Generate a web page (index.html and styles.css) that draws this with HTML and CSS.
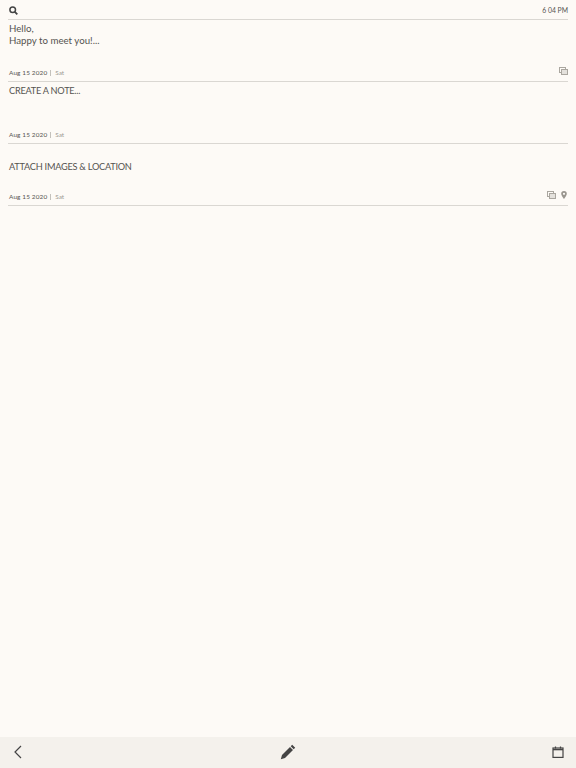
FILE: index.html
```html
<!DOCTYPE html>
<html lang="en">
<head>
    <meta charset="UTF-8">
    <title>Notes</title>
    <link rel="stylesheet" href="styles.css">
</head>
<body>

<div class="page">
    <div class="top">
        <svg class="search" width="9" height="9" viewBox="0 0 9 9">
            <circle cx="3.7" cy="3.7" r="2.8" fill="none" stroke="#444" stroke-width="1.5"/>
            <path d="M5.8 5.8L8.3 8.3" stroke="#444" stroke-width="1.8"/>
        </svg>
        <span class="time">6 04 PM</span>
    </div>

    <div class="list">
        <div class="note">
            <div class="text">Hello,<br>Happy to meet you!...</div>
            <div class="meta">
                <span class="date">Aug 15 2020</span>
                <span class="sep"></span>
                <span class="day">Sat</span>
                <span class="icons">
                    <svg width="9" height="8" viewBox="0 0 9 8">
                        <rect x="0.5" y="0.5" width="6" height="5" fill="none" stroke="#aaa69f"/>
                        <rect x="2.5" y="2.5" width="6" height="5" fill="#e4e1dc" stroke="#aaa69f"/>
                    </svg>
                </span>
            </div>
        </div>

        <div class="note">
            <div class="text caps">CREATE A NOTE...</div>
            <div class="meta">
                <span class="date">Aug 15 2020</span>
                <span class="sep"></span>
                <span class="day">Sat</span>
            </div>
        </div>

        <div class="note">
            <div class="text caps spaced">ATTACH IMAGES &amp; LOCATION</div>
            <div class="meta">
                <span class="date">Aug 15 2020</span>
                <span class="sep"></span>
                <span class="day">Sat</span>
                <span class="icons">
                    <svg width="9" height="8" viewBox="0 0 9 8">
                        <rect x="0.5" y="0.5" width="6" height="5" fill="none" stroke="#aaa69f"/>
                        <rect x="2.5" y="2.5" width="6" height="5" fill="#e4e1dc" stroke="#aaa69f"/>
                    </svg>
                    <svg class="pin" width="6" height="8" viewBox="0 0 6 8">
                        <path d="M3 0a2.8 2.8 0 0 0-2.8 2.8C.2 4.6 3 8 3 8s2.8-3.4 2.8-5.2A2.8 2.8 0 0 0 3 0zm0 3.9a1.1 1.1 0 1 1 0-2.2 1.1 1.1 0 0 1 0 2.2z" fill="#99958e"/>
                    </svg>
                </span>
            </div>
        </div>
    </div>

    <div class="bottom">
        <svg class="back" width="10" height="14" viewBox="0 0 10 14">
            <path d="M8 1L2 7l6 6" fill="none" stroke="#444" stroke-width="1.2"/>
        </svg>
        <svg class="pen" width="16" height="16" viewBox="0 0 16 16">
            <path d="M12.2 .8l3 3-1.5 1.5-3-3zM10 3l3 3-8 8-4.2 1.2L2 11z" fill="#444"/>
        </svg>
        <svg class="cal" width="12" height="12" viewBox="0 0 12 12">
            <rect x="1" y="2" width="10" height="9.4" fill="none" stroke="#444" stroke-width="1.2"/>
            <path d="M1 3.6h10" stroke="#444" stroke-width="1.4"/>
            <path d="M3.5 0.4v2M8.5 0.4v2" stroke="#444" stroke-width="1.2"/>
        </svg>
    </div>
</div>

</body>
</html>
```

FILE: styles.css
```css
* {
    margin: 0;
    padding: 0;
    box-sizing: border-box;
}

body {
    background-color: #fdfaf6;
    font-family: "Lato", "Liberation Sans", sans-serif;
    color: #555350;
}

.page {
    height: 768px;
    display: flex;
    flex-direction: column;
}

.top {
    height: 20px;
    margin: 0 8px;
    padding: 1px 0 0 1px;
    border-bottom: 1px solid #dad7d2;
    display: flex;
    align-items: center;
    justify-content: space-between;
}

.time {
    font-size: 6.8px;
}

.list {
    flex: 1;
}

.note {
    height: 62px;
    margin: 0 8px;
    padding: 3px 1px 0;
    border-bottom: 1px solid #dad7d2;
    display: flex;
    flex-direction: column;
    justify-content: space-between;
}

.text {
    font-size: 9.7px;
    line-height: 12px;
    margin-top: -1px;
}

.caps {
    margin-top: 0;
    font-size: 9.2px;
    letter-spacing: -0.25px;
}

.spaced {
    margin-top: 14px;
}

.meta {
    height: 17px;
    display: flex;
    align-items: center;
    font-size: 6.4px;
}

.date {
    letter-spacing: 0.15px;
}

.sep {
    width: 1px;
    height: 6px;
    margin: 0 4px 0 3px;
    background-color: #c4c1bb;
}

.day {
    color: #9b9892;
}

.icons {
    margin-left: auto;
    margin-top: -3px;
    margin-right: -1px;
    display: flex;
    gap: 5px;
}

.pin {
    margin-right: 1px;
}

.bottom {
    height: 31px;
    padding: 0 12px 1px 13px;
    background-color: #f4f1ec;
    display: grid;
    grid-template-columns: 1fr auto 1fr;
    align-items: center;
}

.pen {
    margin-left: -1px;
}

.cal {
    justify-self: end;
}
```
